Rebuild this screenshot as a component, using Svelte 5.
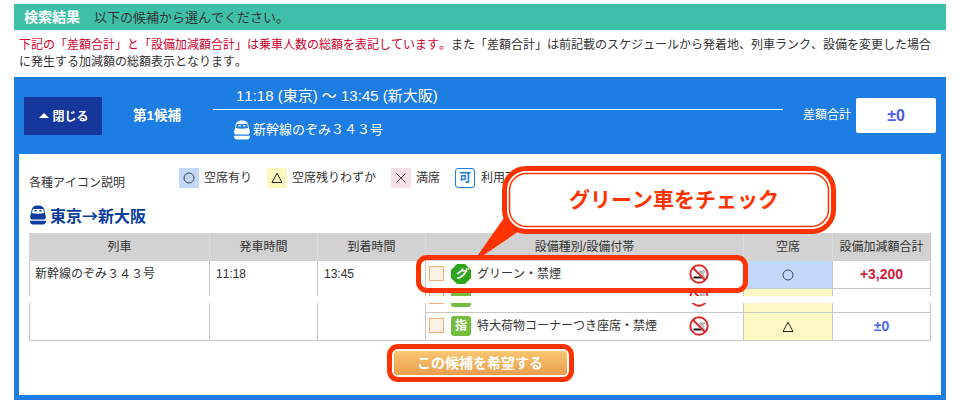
<script>
  const legend = [
    { kind: 'circle', label: '空席有り' },
    { kind: 'tri', label: '空席残りわずか' },
    { kind: 'cross', label: '満席' }
  ];
</script>

{#snippet train(bg)}
  <svg class="train" viewBox="0 0 18 20" aria-hidden="true">
    <path fill="currentColor" d="M2.500 6C2.500 2.500 5 .5 9 .5s6.500 2 6.500 5.500l1.300 5.500c.3 1.500-.3 2.500-1.500 3H2.700c-1.200-.5-1.800-1.500-1.500-3z"/>
    <path fill={bg} d="M3.800 4h10.400l.9 4c-3.700 1.100-8.500 1.100-12.200 0z"/>
    <path fill="currentColor" d="M5.500 5h2.200v1.500H5.500zM10.300 5h2.200v1.500h-2.200z"/>
    <path fill="currentColor" d="M1 15.800h16c.2 2.400-1.300 3.700-3 3.700H4c-1.700 0-3.200-1.300-3-3.700z"/>
  </svg>
{/snippet}

{#snippet sym(kind)}
  <svg class="sym" viewBox="0 0 12 12" aria-hidden="true">
    {#if kind === 'circle'}
      <circle cx="6" cy="6" r="5" fill="none" stroke="#3c4650" stroke-width="1"/>
    {:else if kind === 'tri'}
      <path d="M6 1.200 11 10.500H1z" fill="none" stroke="#222" stroke-width="1"/>
    {:else}
      <path d="M1.500 1.500l9 9M10.500 1.500l-9 9" fill="none" stroke="#555" stroke-width="1"/>
    {/if}
  </svg>
{/snippet}

{#snippet nosmoke()}
  <svg class="nosmoke" viewBox="0 0 20 20" aria-hidden="true">
    <circle cx="10" cy="10" r="8.700" fill="#fff" stroke="#dc2a2a" stroke-width="2"/>
    <circle cx="12" cy="8" r="1.800" fill="#aaa"/>
    <circle cx="14.500" cy="7.500" r="1.700" fill="#bbb"/>
    <circle cx="14" cy="10.500" r="1.500" fill="#bbb"/>
    <path d="M4.500 13.500h8" stroke="#111" stroke-width="2"/>
    <path d="M13 13.500h2.500" stroke="#999" stroke-width="2"/>
    <path d="M4 4l12 12" stroke="#dc2a2a" stroke-width="2"/>
  </svg>
{/snippet}

<main class="page">
  <header class="bar"><strong>検索結果</strong><span>以下の候補から選んでください。</span></header>
  <div class="notice">
    <div class="nline"><span class="red">下記の「差額合計」と「設備加減額合計」は乗車人数の総額を表記しています。</span><span>また「差額合計」は前記載のスケジュールから発着地、列車ランク、設備を変更した場合</span></div>
    <div class="nline">に発生する加減額の総額表示となります。</div>
  </div>

  <section class="panel">
    <div class="phead">
      <button class="close"><i class="caret"></i>閉じる</button>
      <div class="cand">第1候補</div>
      <div class="route">
        <div class="time">11:18 (東京) ～ 13:45 (新大阪)</div>
        <div class="name">{@render train('#1e7de2')}<span>新幹線のぞみ３４３号</span></div>
      </div>
      <div class="difflabel">差額合計</div>
      <div class="diffbox">±0</div>
    </div>

    <div class="pbody">
      <div class="legend">
        <div class="legtitle">各種アイコン説明</div>
        {#each legend as l}
          <div class="leg"><span class="lic {l.kind}">{@render sym(l.kind)}</span>{l.label}</div>
        {/each}
        <div class="leg"><span class="lic ka">可</span>利用可能</div>
      </div>

      <h2 class="title">{@render train('#fff')}<span>東京→新大阪</span></h2>

      <div class="tbl">
        <div class="th">列車</div>
        <div class="th">発車時間</div>
        <div class="th">到着時間</div>
        <div class="th">設備種別/設備付帯</div>
        <div class="th">空席</div>
        <div class="th">設備加減額合計</div>

        <div class="td left c1">新幹線のぞみ３４３号</div>
        <div class="td left c2">11:18</div>
        <div class="td left c3">13:45</div>

        <div class="td eq r1">
          <i class="chk"></i><i class="ic oct">グ</i><span class="eqt">グリーン・禁煙</span>{@render nosmoke()}
        </div>
        <div class="td seat blue r1">{@render sym('circle')}</div>
        <div class="td amt plus r1">+3,200</div>

        <div class="td eq cut r2">
          <div class="slice top"><i class="chk"></i><i class="ic sq"></i>{@render nosmoke()}</div>
          <div class="slice bot"><i class="chk"></i><i class="ic sq"></i>{@render nosmoke()}</div>
        </div>
        <div class="td seat yellow r2"></div>
        <div class="td amt r2"></div>

        <div class="td eq r3">
          <i class="chk"></i><i class="ic sq">指</i><span class="eqt">特大荷物コーナーつき座席・禁煙</span>{@render nosmoke()}
        </div>
        <div class="td seat yellow r3">{@render sym('tri')}</div>
        <div class="td amt zero r3">±0</div>

        <div class="band"></div>
      </div>

      <div class="actions">
        <div class="ring"><button class="want">この候補を希望する</button></div>
      </div>

      <div class="callout">
        <svg viewBox="0 0 364 92" aria-hidden="true">
          <path d="M3 90h6L44 66 31 50z" fill="#ff3300"/>
          <rect x="27" y="1" width="334" height="68" rx="24" fill="#ff3300"/>
          <rect x="32" y="6" width="324" height="58" rx="19" fill="#fff"/>
          <rect x="34.500" y="8.500" width="319" height="53" rx="17" fill="#fff" stroke="#ff3300" stroke-width="1.500"/>
        </svg>
        <span>グリーン車をチェック</span>
      </div>
      <div class="hilite"></div>
    </div>
  </section>
</main>

<style>
  :global(body) { margin: 0; background: #fff; }
  .page {
    width: 932px;
    height: 402px;
    padding: 4px 14px 0;
    font: 12px/17px "Liberation Sans", "Noto Sans CJK JP", sans-serif;
    color: #333;
    text-spacing-trim: space-all;
    font-feature-settings: "chws" 0, "halt" 0, "palt" 0;
    font-kerning: none;
  }
  .bar {
    height: 26px;
    background: #40bfa8;
    display: flex;
    align-items: center;
    gap: 14px;
    padding-left: 10px;
    font-size: 13px;
  }
  .bar strong { color: #fff; font-size: 14px; }
  .notice { padding: 7px 5px 6px; height: 34px; }
  .nline { white-space: nowrap; }
  .red { color: #d0002c; }
  .panel {
    background: #1e7de2;
    padding: 0 5px 5px;
    height: 318px;
  }
  .phead {
    height: 77px;
    display: flex;
    align-items: center;
    color: #fff;
    margin: 0 -5px;
    padding-left: 10px;
  }
  .close {
    width: 78px;
    height: 38px;
    border: 0;
    padding: 0 0 0 2px;
    background: #15379b;
    color: #fff;
    font: bold 12px "Liberation Sans", "Noto Sans CJK JP", sans-serif;
    display: flex;
    align-items: center;
    justify-content: center;
    gap: 3px;
  }
  .caret {
    width: 0; height: 0;
    border: 5.500px solid transparent;
    border-top: 0;
    border-bottom: 5px solid #fff;
  }
  .cand { margin-left: 31px; width: 80px; font-weight: bold; font-size: 13.500px; }
  .route { width: 570px; }
  .time {
    height: 26px;
    box-sizing: border-box;
    padding: 2px 0 0 23px;
    border-bottom: 1px solid #fff;
    font-size: 15px;
    line-height: 20px;
  }
  .name {
    display: flex;
    align-items: center;
    gap: 2px;
    padding: 10px 0 7px 20px;
    font-size: 13px;
    line-height: 20px;
  }
  .train { width: 18px; height: 20px; flex: none; }
  .difflabel { margin-left: 20px; width: 53px; }
  .diffbox {
    width: 80px;
    height: 35px;
    background: #fff;
    border-radius: 2px;
    color: #4a5ce8;
    font-weight: bold;
    font-size: 16px;
    display: flex;
    align-items: center;
    justify-content: center;
  }
  .pbody {
    position: relative;
    background: #fff;
    height: 241px;
    box-sizing: border-box;
    padding: 14px 10px 0;
  }
  .legend { display: flex; height: 20px; }
  .legtitle { width: 150px; padding-top: 7px; }
  .leg {
    display: flex;
    align-items: center;
    gap: 5px;
    margin-right: 15px;
    height: 20px;
    white-space: nowrap;
  }
  .lic {
    width: 20px; height: 20px;
    display: flex;
    align-items: center;
    justify-content: center;
    box-sizing: border-box;
  }
  .lic.circle { background: #c2d8f8; }
  .lic.tri { background: #fdf8c0; }
  .lic.cross { background: #f8dfe6; }
  .lic.ka {
    background: #fff;
    border: 1px solid #1e7de2;
    border-radius: 3px;
    color: #1e7de2;
    font-weight: bold;
    width: 20px;
  }
  .leg:last-child { gap: 6px; }
  .sym { width: 12px; height: 12px; }
  .title {
    margin: 17px 0 8px;
    height: 20px;
    display: flex;
    align-items: center;
    gap: 3px;
    font-family: "Noto Sans CJK JP", sans-serif;
    font-size: 16px;
    line-height: 20px;
    font-weight: bold;
    color: #0a3c9c;
  }
  .tbl {
    position: relative;
    display: grid;
    width: 902px;
    grid-template-columns: 180px 108px 108px 318px 89px 99px;
    grid-template-rows: 28px 28px 24px 28px;
    box-sizing: border-box;
  }
  .th {
    background: #d2d2d2;
    text-align: center;
    line-height: 29px;
    border-left: 1px solid #dcdcdc;
  }
  .td {
    box-sizing: border-box;
    border-left: 1px solid #c8c8c8;
    border-bottom: 1px solid #c8c8c8;
  }
  .td.amt, .th:nth-child(6) { border-right: 1px solid #c8c8c8; }
  .left {
    grid-row: 2 / 5;
    padding: 5px 5px 0 5px;
    line-height: 17px;
  }
  .c2, .c3 { padding-left: 6px; }
  .r1 { grid-row: 2; }
  .r2 { grid-row: 3; }
  .r3 { grid-row: 4; }
  .eq, .slice {
    display: flex;
    align-items: flex-start;
    padding: 3px 34px 0 3px;
  }
  .eq { grid-column: 4; }
  .cut { display: block; padding: 0; overflow: hidden; }
  .slice { box-sizing: border-box; height: 14px; }
  .slice.top { overflow: hidden; }
  .slice.bot { height: 28px; margin-top: -19px; }
  .seat { grid-column: 5; display: flex; align-items: center; justify-content: center; }
  .amt {
    grid-column: 6;
    display: flex;
    align-items: center;
    justify-content: center;
    font-weight: bold;
    font-size: 14px;
  }
  .chk {
    width: 15px; height: 15px;
    margin-top: 2px;
    box-sizing: border-box;
    border: 1px solid #f2ae70;
    background: #fdf2e6;
    flex: none;
  }
  .ic {
    width: 20px; height: 20px;
    margin-left: 7px;
    flex: none;
    color: #fff;
    font-style: normal;
    font-weight: bold;
    font-size: 12px;
    line-height: 20px;
    text-align: center;
  }
  .oct {
    background: #2fa31c;
    font-style: italic;
    clip-path: polygon(30% 0, 70% 0, 100% 30%, 100% 70%, 70% 100%, 30% 100%, 0 70%, 0 30%);
  }
  .sq { background: #76bd3e; border-radius: 3px; }
  .eqt { margin-left: 6px; line-height: 20px; white-space: nowrap; }
  .nosmoke { width: 20px; height: 20px; margin-left: auto; flex: none; }
  .blue { background: #c2d8fb; }
  .yellow { background: #fdf8c3; }
  .plus { color: #d01c3c; }
  .zero { color: #4a6ae8; }
  .band {
    position: absolute;
    left: -1px;
    right: -2px;
    top: 63px;
    height: 7px;
    background: #fff;
  }
  .actions { display: flex; justify-content: center; margin-top: 3px; }
  .ring {
    border: 5px solid #ff3300;
    border-radius: 11px;
    padding: 2px;
    background: #fff;
  }
  .want {
    display: block;
    width: 173px;
    height: 24px;
    padding: 0;
    border: 0;
    border-radius: 3px;
    background: linear-gradient(#f8c670, #eb9f4f);
    color: #fff;
    font: bold 14px/24px "Liberation Sans", "Noto Sans CJK JP", sans-serif;
  }
  .callout {
    position: absolute;
    left: 456px;
    top: 11px;
    width: 364px;
    height: 92px;
  }
  .callout svg { display: block; width: 364px; height: 92px; }
  .callout span {
    position: absolute;
    left: 0;
    width: 398px;
    top: 21px;
    text-align: center;
    color: #ff3300;
    font-size: 21px;
    line-height: 28px;
    font-weight: bold;
    white-space: nowrap;
  }
  .hilite {
    position: absolute;
    left: 397px;
    top: 101px;
    width: 332px;
    height: 38px;
    box-sizing: border-box;
    border: 5px solid #ff3300;
    border-radius: 11px;
  }
</style>
